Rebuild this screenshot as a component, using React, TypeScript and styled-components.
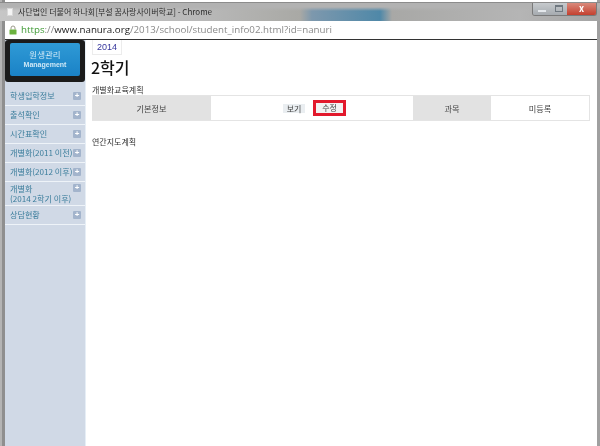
import React from 'react';
import styled, { createGlobalStyle } from 'styled-components';

const GlobalStyle = createGlobalStyle`
  html, body {
    margin: 0;
    padding: 0;
    background: #fff;
  }
`;

const Screen = styled.div`
  width: 600px;
  height: 446px;
  overflow: hidden;
  display: flex;
  flex-direction: column;
  font-family: "Noto Sans CJK KR", "Liberation Sans", sans-serif;
  color: #222;
  filter: blur(0.4px);
  background: linear-gradient(to right, #b4b4b4 0 2px, #8f8f8f 2px 5px, #fff 5px 597px, #a0a0a0 597px);
`;

const TitleBar = styled.div`
  height: 19px;
  margin-top: 2px;
  flex: none;
  display: flex;
  align-items: center;
  padding: 0 3px 0 7px;
  box-sizing: border-box;
  border-top: 1px solid #8c8c8c;
  background:
    linear-gradient(to bottom, #b2b2b2 0 4px, rgba(178, 178, 178, 0) 8px),
    linear-gradient(
      to right,
      #c6c6c6 0,
      #b9b9b9 200px,
      #a9a9a5 300px,
      #7d98ad 312px,
      #4f88a8 380px,
      #a8a8a6 392px,
      #b5b5b5 520px,
      #a4a4a4 100%
    );
`;

const PageIcon = styled.span`
  width: 6px;
  height: 8px;
  background: #f4f4f4;
  border: 1px solid #d8d8d8;
  box-sizing: border-box;
  margin-right: 5px;
`;

const TitleText = styled.span`
  font-size: 8px;
  color: #2c2c2c;
  flex: 1;
  white-space: nowrap;
  margin-top: -1px;
`;

const WindowButtons = styled.div`
  display: flex;
  height: 12px;
  margin-top: -6px;
  border: 1px solid #7a7a7a;
  border-top: 0;
  border-radius: 0 0 3px 3px;
  overflow: hidden;
`;

const WindowButton = styled.div<{ $close?: boolean; $wide?: boolean }>`
  width: ${props => (props.$wide ? 29 : 17)}px;
  display: flex;
  align-items: center;
  justify-content: center;
  font-size: 9px;
  font-weight: 700;
  color: #fff;
  background: ${props =>
    props.$close
      ? 'linear-gradient(#d98a7c, #c4402f)'
      : 'linear-gradient(#c6cacd, #a6abb0)'};
`;

const MinIcon = styled.span`
  width: 8px;
  height: 2px;
  margin-top: 4px;
  background: #e4e8ec;
`;

const MaxIcon = styled.span`
  width: 8px;
  height: 7px;
  box-sizing: border-box;
  border: 1px solid #6f7880;
  border-top-width: 2px;
`;

const AddressRow = styled.div`
  flex: none;
  height: 19px;
  margin: 0 3px 0 5px;
  box-sizing: border-box;
  display: flex;
  align-items: center;
  padding: 0 0 1px 4px;
  background: #fff;
  border-bottom: 1px solid #333;
  font-family: "Open Sans", "Liberation Sans", sans-serif;
  font-size: 9.75px;
  white-space: nowrap;
`;

const LockIcon = styled.svg`
  width: 8px;
  height: 10px;
  margin-right: 4px;
  flex: none;
`;

const Scheme = styled.span`
  color: #3f9a35;
`;

const Host = styled.span`
  color: #222;
`;

const Rest = styled.span`
  color: #8a8a8a;
`;

const Body = styled.div`
  flex: 1;
  min-height: 0;
  display: flex;
  margin: 0 3px 0 5px;
  background: #fff;
`;

const Sidebar = styled.nav`
  width: 80px;
  flex: none;
  background: #d0d9e6;
  border-right: 1px solid #e6eef6;
`;

const LogoFrame = styled.div`
  height: 42px;
  padding: 3px 5px 6px;
  box-sizing: border-box;
  background: #1b1b1b;
  border-radius: 3px;
`;

const LogoButton = styled.div`
  height: 100%;
  display: flex;
  flex-direction: column;
  align-items: center;
  justify-content: center;
  border-radius: 2px;
  background: linear-gradient(#2f9ad6, #1a82c6);
  color: #cfe8f6;
`;

const LogoTitle = styled.span`
  font-size: 8.5px;
  line-height: 11px;
`;

const LogoSub = styled.span`
  font-family: "Liberation Sans", sans-serif;
  font-size: 7px;
  font-weight: 700;
  line-height: 10px;
`;

const Menu = styled.ul`
  list-style: none;
  margin: 5px 0 0;
  padding: 0;
`;

const MenuItem = styled.li<{ $tall?: boolean }>`
  height: ${props => (props.$tall ? 24 : 19)}px;
  box-sizing: border-box;
  padding: ${props => (props.$tall ? '2px 4px 0 5px' : '0 4px 0 5px')};
  display: flex;
  align-items: ${props => (props.$tall ? 'flex-start' : 'center')};
  justify-content: space-between;
  border-bottom: 1px solid #eef3f8;
  font-size: 8.1px;
  line-height: 10px;
  color: #3b7d9c;
  white-space: nowrap;
`;

const PlusBox = styled.span`
  width: 8px;
  height: 8px;
  flex: none;
  border-radius: 1px;
  background: #a3b4cc;
  color: #fff;
  font: 700 8px/8px "Liberation Sans", sans-serif;
  text-align: center;
`;

const Main = styled.main`
  flex: 1;
  min-width: 0;
  padding: 0 7px 0 6px;
`;

const YearTab = styled.div`
  width: 30px;
  height: 15px;
  box-sizing: border-box;
  border: 1px solid #ececec;
  border-top: 0;
  text-align: center;
  font-family: "Liberation Sans", sans-serif;
  font-size: 9px;
  line-height: 14px;
  color: #35359c;
`;

const Term = styled.h1`
  margin: 2px 0 0 -1px;
  font-size: 16px;
  line-height: 20px;
  font-weight: 500;
  color: #111;
`;

const SectionLabel = styled.div<{ $gap?: number }>`
  margin-top: ${props => props.$gap ?? 0}px;
  font-size: 8px;
  line-height: 10px;
  color: #333;
`;

const InfoTable = styled.div`
  display: grid;
  grid-template-columns: 119px 202px 78px 1fr;
  height: 26px;
  border: 1px solid #e4e4e4;
  border-left: 0;
  box-sizing: border-box;
  font-size: 8.2px;
  color: #444;
`;

const Cell = styled.div<{ $head?: boolean }>`
  display: flex;
  align-items: center;
  justify-content: center;
  background: ${props => (props.$head ? '#e2e2e2' : '#fff')};
`;

const ActionCell = styled(Cell)`
  gap: 8px;
  padding-left: 5px;
`;

const ActionButton = styled.span`
  width: 22px;
  height: 9px;
  background: #eaeef1;
  text-align: center;
  font-size: 8px;
  line-height: 9px;
  color: #444;
`;

const EditButton = styled(ActionButton)`
  width: 33px;
  height: 16px;
  box-sizing: border-box;
  border: 3px solid #e2192c;
  background: #f2f2f2;
  line-height: 10px;
`;

const App: React.FC = () => {
  return (
    <Screen>
      <GlobalStyle />
      <TitleBar>
        <PageIcon />
        <TitleText>사단법인 더불어 하나회[부설 꿈사랑사이버학교] - Chrome</TitleText>
        <WindowButtons>
          <WindowButton><MinIcon /></WindowButton>
          <WindowButton><MaxIcon /></WindowButton>
          <WindowButton $close $wide>x</WindowButton>
        </WindowButtons>
      </TitleBar>
      <AddressRow>
        <LockIcon viewBox="0 0 8 10">
          <path d="M2 4.5V3a2 2 0 0 1 4 0v1.5" fill="none" stroke="#9a9a8a" strokeWidth="1" />
          <rect x="0.5" y="4.5" width="7" height="5" rx="0.5" fill="#6cb33f" />
        </LockIcon>
        <Scheme>https</Scheme>
        <Rest>://</Rest>
        <Host>www.nanura.org</Host>
        <Rest>/2013/school/student_info02.html?id=nanuri</Rest>
      </AddressRow>
      <Body>
        <Sidebar>
          <LogoFrame>
            <LogoButton>
              <LogoTitle>원생관리</LogoTitle>
              <LogoSub>Management</LogoSub>
            </LogoButton>
          </LogoFrame>
          <Menu>
            <MenuItem>학생입학정보<PlusBox>+</PlusBox></MenuItem>
            <MenuItem>출석확인<PlusBox>+</PlusBox></MenuItem>
            <MenuItem>시간표확인<PlusBox>+</PlusBox></MenuItem>
            <MenuItem>개별화(2011 이전)<PlusBox>+</PlusBox></MenuItem>
            <MenuItem>개별화(2012 이후)<PlusBox>+</PlusBox></MenuItem>
            <MenuItem $tall>
              <span>개별화<br />(2014 2학기 이후)</span>
              <PlusBox>+</PlusBox>
            </MenuItem>
            <MenuItem>상담현황<PlusBox>+</PlusBox></MenuItem>
          </Menu>
        </Sidebar>
        <Main>
          <YearTab>2014</YearTab>
          <Term>2학기</Term>
          <SectionLabel $gap={8}>개별화교육계획</SectionLabel>
          <InfoTable>
            <Cell $head>기본정보</Cell>
            <ActionCell>
              <ActionButton>보기</ActionButton>
              <EditButton>수정</EditButton>
            </ActionCell>
            <Cell $head>과목</Cell>
            <Cell>미등록</Cell>
          </InfoTable>
          <SectionLabel $gap={16}>연간지도계획</SectionLabel>
        </Main>
      </Body>
    </Screen>
  );
};

export default App;
